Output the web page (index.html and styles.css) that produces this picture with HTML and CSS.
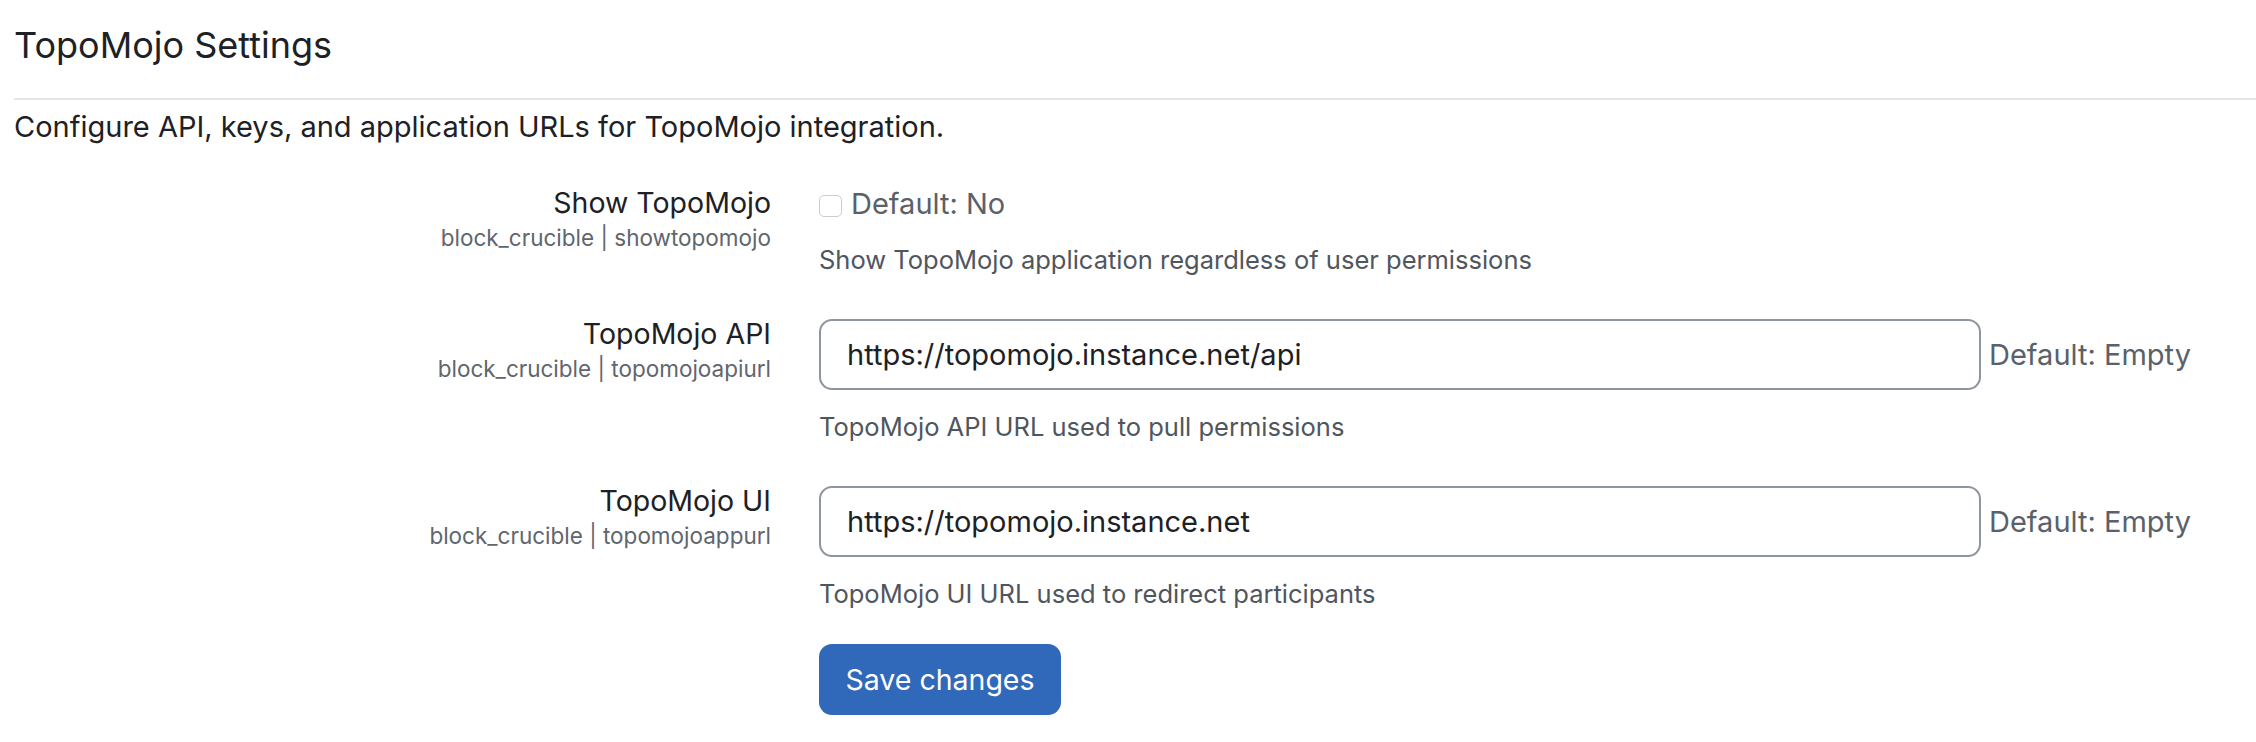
FILE: index.html
```html
<!DOCTYPE html>
<html lang="en">
<head>
<meta charset="utf-8">
<title>TopoMojo Settings</title>
<link rel="stylesheet" href="styles.css">
</head>
<body>
<div class="page">
  <h2 class="title">TopoMojo Settings</h2>
  <div class="rule"></div>
  <p class="intro">Configure API, keys, and application URLs for TopoMojo integration.</p>

  <div class="setting">
    <div class="label-col">
      <div class="label">Show TopoMojo</div>
      <div class="shortname">block_crucible | showtopomojo</div>
    </div>
    <div class="field-col">
      <div class="check-line">
        <span class="checkbox"></span>
        <span class="default">Default: No</span>
      </div>
      <div class="desc">Show TopoMojo application regardless of user permissions</div>
    </div>
  </div>

  <div class="setting">
    <div class="label-col">
      <div class="label">TopoMojo API</div>
      <div class="shortname">block_crucible | topomojoapiurl</div>
    </div>
    <div class="field-col">
      <div class="input-line">
        <div class="input">https://topomojo.instance.net/api</div>
        <span class="default">Default: Empty</span>
      </div>
      <div class="desc">TopoMojo API URL used to pull permissions</div>
    </div>
  </div>

  <div class="setting">
    <div class="label-col">
      <div class="label">TopoMojo UI</div>
      <div class="shortname">block_crucible | topomojoappurl</div>
    </div>
    <div class="field-col">
      <div class="input-line">
        <div class="input">https://topomojo.instance.net</div>
        <span class="default">Default: Empty</span>
      </div>
      <div class="desc">TopoMojo UI URL used to redirect participants</div>
    </div>
  </div>

  <div class="actions">
    <button class="save" type="button">Save changes</button>
  </div>
</div>
</body>
</html>
```
FILE: styles.css
```css
* { box-sizing: border-box; }
html, body { margin: 0; padding: 0; background: #fff; }
body {
  font-family: Inter, "Noto Sans", Roboto, sans-serif;
  color: #1d2125;
}
.page {
  padding: 23px 0 0 14px;
}
.title {
  margin: 0;
  font-size: 36px;
  font-weight: 400;
  line-height: 44px;
  color: #1d2125;
}
.rule {
  margin-top: 31px;
  height: 2px;
  background: #e3e5e8;
}
.intro {
  margin: 5px 0 0;
  font-size: 29px;
  line-height: 44px;
  color: #1d2125;
}
.setting {
  display: grid;
  grid-template-columns: 757px 1fr;
  column-gap: 48px;
  margin-top: 36px;
}
.intro + .setting { margin-top: 34px; }
.label-col {
  text-align: right;
}
.label {
  font-size: 28.5px;
  line-height: 40px;
  color: #1d2125;
}
.shortname {
  margin-top: 1px;
  font-size: 22.5px;
  line-height: 28px;
  color: #5f666d;
}
.check-line {
  display: flex;
  align-items: center;
  gap: 9px;
  height: 40px;
}
.checkbox {
  width: 23px;
  height: 22px;
  margin-top: 6px;
  border: 1.5px solid #c9cdd2;
  border-radius: 5px;
  background: #fff;
}
.default {
  font-size: 29px;
  color: #5a6169;
}
.desc {
  margin-top: 19px;
  font-size: 25.5px;
  line-height: 36px;
  color: #4f565d;
}
.input-line {
  display: flex;
  align-items: center;
  gap: 8px;
  margin-top: 5px;
}
.input {
  width: 1162px;
  height: 71px;
  border: 2px solid #8f959e;
  border-radius: 13px;
  padding: 0 26px;
  display: flex;
  align-items: center;
  font-size: 29px;
  color: #1d2125;
}
.actions {
  margin-top: 32px;
  padding-left: 805px;
}
.save {
  width: 242px;
  height: 71px;
  border: none;
  border-radius: 13px;
  background: #3169ba;
  color: #fff;
  font-family: Inter, "Noto Sans", Roboto, sans-serif;
  font-size: 28.5px;
}
```
